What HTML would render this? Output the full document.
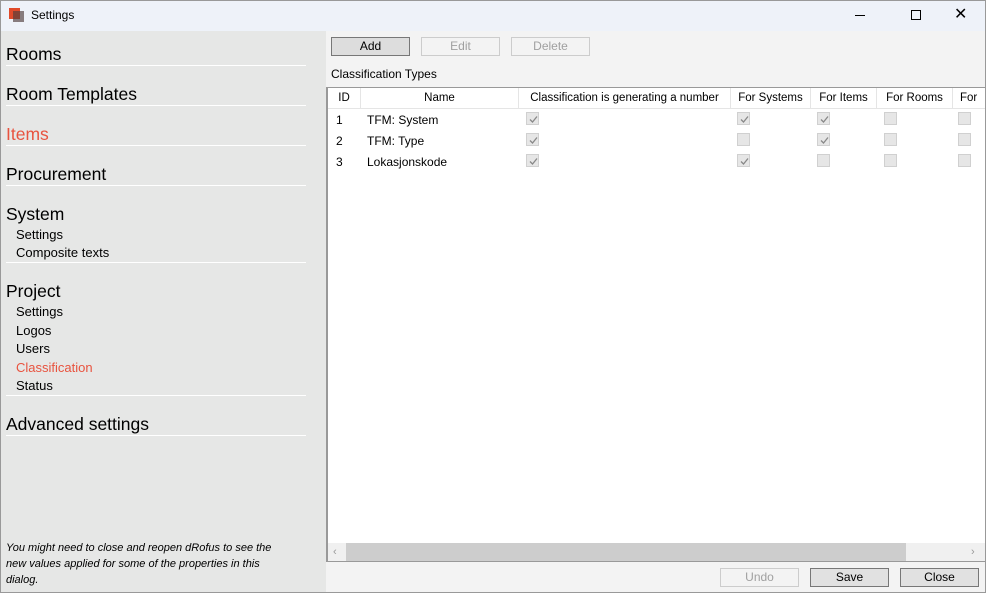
<!DOCTYPE html>
<html><head><style>
*{margin:0;padding:0;box-sizing:border-box}
body{width:986px;height:593px;overflow:hidden;background:#f3f3f3;font-family:"Liberation Sans",sans-serif;position:relative;color:#000}
.a{position:absolute;white-space:nowrap}
.h{font-size:17.5px;left:6px;line-height:20px}
.s{font-size:13px;left:16px;line-height:16px}
.ln{position:absolute;left:6px;width:300px;height:1px;background:#fff}
.btn{position:absolute;height:19px;width:79px;border:1px solid #adadad;background:#e1e1e1;font-size:12px;text-align:center;line-height:17px}
.dis{background:#f3f3f3;border-color:#ccc;color:#a0a0a0}
.cell{position:absolute;font-size:12px;line-height:20px}
.hd{position:absolute;top:88px;height:21px;border-right:1px solid #e5e5e5;font-size:11.5px;line-height:21px;text-align:center;color:#000}
.cb{position:absolute;width:13px;height:13px;border:1px solid #d0d0d0;background:#e6e6e6}
.cb svg{position:absolute;left:1px;top:1px}
</style></head><body>
<div class="a" style="left:0;top:0;width:986px;height:31px;background:#eef2f9"></div>
<div class="a" style="left:9px;top:8px;width:11px;height:11px;background:#e04a2a"></div>
<div class="a" style="left:13px;top:11px;width:11px;height:11px;background:rgba(80,60,60,.65)"></div>
<div class="a" style="left:31px;top:8px;font-size:12px">Settings</div>
<div class="a" style="left:855px;top:15px;width:10px;height:1px;background:#000"></div>
<div class="a" style="left:911px;top:10px;width:10px;height:10px;border:1px solid #000"></div>
<div class="a" style="left:954px;top:4px;font-size:16px">✕</div>

<div class="a" style="left:1px;top:31px;width:325px;height:561px;background:#e6e7e6"></div>
<div class="a" style="left:326px;top:87px;width:1px;height:475px;background:#999"></div>

<div class="a h" style="top:44px">Rooms</div><div class="ln" style="top:65px"></div>
<div class="a h" style="top:84px">Room Templates</div><div class="ln" style="top:105px"></div>
<div class="a h" style="top:124px;color:#e8533f">Items</div><div class="ln" style="top:145px"></div>
<div class="a h" style="top:164px">Procurement</div><div class="ln" style="top:185px"></div>
<div class="a h" style="top:204px">System</div>
<div class="a s" style="top:227px">Settings</div>
<div class="a s" style="top:245px">Composite texts</div><div class="ln" style="top:262px"></div>
<div class="a h" style="top:281px">Project</div>
<div class="a s" style="top:304px">Settings</div>
<div class="a s" style="top:323px">Logos</div>
<div class="a s" style="top:341px">Users</div>
<div class="a s" style="top:360px;color:#e8533f">Classification</div>
<div class="a s" style="top:378px">Status</div><div class="ln" style="top:395px"></div>
<div class="a h" style="top:414px">Advanced settings</div><div class="ln" style="top:435px"></div>
<div class="a" style="left:6px;top:540px;font-size:11px;font-style:italic;line-height:16px;white-space:normal;width:282px">You might need to close and reopen dRofus to see the new values applied for some of the properties in this dialog.</div>

<div class="btn" style="left:331px;top:37px;background:#ddd;border-color:#777">Add</div>
<div class="btn dis" style="left:421px;top:37px">Edit</div>
<div class="btn dis" style="left:511px;top:37px">Delete</div>
<div class="a" style="left:331px;top:67px;font-size:12px">Classification Types</div>

<div class="a" style="left:327px;top:87px;width:659px;height:475px;background:#fff;border:1px solid #999;border-right:none"></div>
<div class="a" style="left:328px;top:108px;width:658px;height:1px;background:#e5e5e5"></div>
<div class="hd" style="left:328px;width:33px">ID</div>
<div class="hd" style="left:361px;width:158px">Name</div>
<div class="hd" style="left:519px;width:212px">Classification is generating a number</div>
<div class="hd" style="left:731px;width:80px">For Systems</div>
<div class="hd" style="left:811px;width:66px">For Items</div>
<div class="hd" style="left:877px;width:76px">For Rooms</div>
<div class="hd" style="left:953px;width:33px;text-align:left;padding-left:7px;border:none;overflow:hidden">For D</div>

<div class="cell" style="left:336px;top:110px">1</div><div class="cell" style="left:367px;top:110px">TFM: System</div>
<div class="cell" style="left:336px;top:131px">2</div><div class="cell" style="left:367px;top:131px">TFM: Type</div>
<div class="cell" style="left:336px;top:152px">3</div><div class="cell" style="left:367px;top:152px">Lokasjonskode</div>

<div class="cb" style="left:526px;top:112px"><svg width="11" height="11"><path d="M2 5.5L4.5 8L9 2.5" stroke="#888" fill="none" stroke-width="1.3"/></svg></div>
<div class="cb" style="left:526px;top:133px"><svg width="11" height="11"><path d="M2 5.5L4.5 8L9 2.5" stroke="#888" fill="none" stroke-width="1.3"/></svg></div>
<div class="cb" style="left:526px;top:154px"><svg width="11" height="11"><path d="M2 5.5L4.5 8L9 2.5" stroke="#888" fill="none" stroke-width="1.3"/></svg></div>
<div class="cb" style="left:737px;top:112px"><svg width="11" height="11"><path d="M2 5.5L4.5 8L9 2.5" stroke="#888" fill="none" stroke-width="1.3"/></svg></div>
<div class="cb" style="left:737px;top:133px"></div>
<div class="cb" style="left:737px;top:154px"><svg width="11" height="11"><path d="M2 5.5L4.5 8L9 2.5" stroke="#888" fill="none" stroke-width="1.3"/></svg></div>
<div class="cb" style="left:817px;top:112px"><svg width="11" height="11"><path d="M2 5.5L4.5 8L9 2.5" stroke="#888" fill="none" stroke-width="1.3"/></svg></div>
<div class="cb" style="left:817px;top:133px"><svg width="11" height="11"><path d="M2 5.5L4.5 8L9 2.5" stroke="#888" fill="none" stroke-width="1.3"/></svg></div>
<div class="cb" style="left:817px;top:154px"></div>
<div class="cb" style="left:884px;top:112px"></div><div class="cb" style="left:884px;top:133px"></div><div class="cb" style="left:884px;top:154px"></div>
<div class="cb" style="left:958px;top:112px"></div><div class="cb" style="left:958px;top:133px"></div><div class="cb" style="left:958px;top:154px"></div>

<div class="a" style="left:328px;top:543px;width:658px;height:18px;background:#f0f0f0"></div>
<div class="a" style="left:346px;top:543px;width:560px;height:18px;background:#cdcdcd"></div>
<div class="a" style="left:333px;top:543px;font-size:11px;color:#999;line-height:18px">‹</div>
<div class="a" style="left:971px;top:543px;font-size:11px;color:#999;line-height:18px">›</div>

<div class="btn dis" style="left:720px;top:568px">Undo</div>
<div class="btn" style="left:810px;top:568px;border-color:#777">Save</div>
<div class="btn" style="left:900px;top:568px;border-color:#777">Close</div>
<div class="a" style="left:0;top:0;width:986px;height:593px;border:1px solid #999;pointer-events:none"></div>
</body></html>
